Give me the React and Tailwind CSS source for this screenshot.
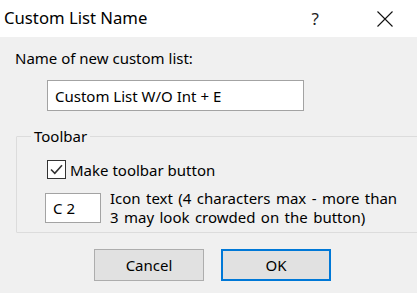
import React from 'react';

const CloseIcon = () => (
    <svg width="16" height="16" viewBox="0 0 16 16" className="block">
        <path d="M0.5 0.5 L15.5 15.5 M15.5 0.5 L0.5 15.5" stroke="#111" strokeWidth="1.1" fill="none" />
    </svg>
);

const CheckMark = () => (
    <svg width="15" height="15" viewBox="0 0 15 15" className="block">
        <path d="M2 7.5 L5.8 11.3 L13 3.2" stroke="#333" strokeWidth="1.6" fill="none" />
    </svg>
);

const App = () => {
    return (
        <div className="w-[417px] h-[293px] overflow-hidden flex flex-col bg-[#f0f0f0] text-black font-['Noto_Sans','Open_Sans',sans-serif]">
            {/* Title bar */}
            <div className="h-[37px] bg-white flex items-center shrink-0">
                <span className="pl-[4px] text-[16.7px] leading-none">Custom List Name</span>
                <span className="ml-auto text-[17px] leading-none text-[#222] mr-[58px]">?</span>
                <div className="mr-[24px]"><CloseIcon /></div>
            </div>

            {/* Body */}
            <div className="flex-1 flex flex-col text-[15px] leading-[18px]">
                <div className="pl-[15px] pt-[12px]">Name of new custom list:</div>

                <div className="ml-[47px] mt-[13px] w-[257px] h-[31px] bg-white border border-[#a3a3a3] flex items-center pl-[7px]">
                    Custom List W/O Int + E
                </div>

                <fieldset className="ml-[16px] mt-[16px] w-[410px] h-[106px] border border-[#dcdcdc] rounded-[1px]">
                    <legend className="ml-[14px] px-[3px] leading-[18px]">Toolbar</legend>

                    <div className="flex items-center mt-[15px] ml-[30px]">
                        <div className="w-[19px] h-[19px] border border-[#333] bg-white flex items-center justify-center">
                            <CheckMark />
                        </div>
                        <span className="ml-[4px]">Make toolbar button</span>
                    </div>

                    <div className="flex items-start mt-[14px] ml-[28px]">
                        <div className="w-[56px] h-[30px] bg-white border border-[#a3a3a3] flex items-center pl-[7px] shrink-0">
                            C 2
                        </div>
                        <div className="ml-[9px] mt-[-4px] leading-[19px] [word-spacing:1.5px] whitespace-nowrap">
                            Icon text (4 characters max - more than<br />
                            3 may look crowded on the button)
                        </div>
                    </div>
                </fieldset>

                <div className="flex mt-[16px] ml-[94px] gap-[17px]">
                    <button className="w-[110px] h-[32px] bg-[#e1e1e1] border border-[#adadad] flex items-center justify-center">
                        Cancel
                    </button>
                    <button className="w-[110px] h-[32px] bg-[#e1e1e1] border-2 border-[#0078d7] flex items-center justify-center">
                        OK
                    </button>
                </div>
            </div>
        </div>
    );
};

export default App;
